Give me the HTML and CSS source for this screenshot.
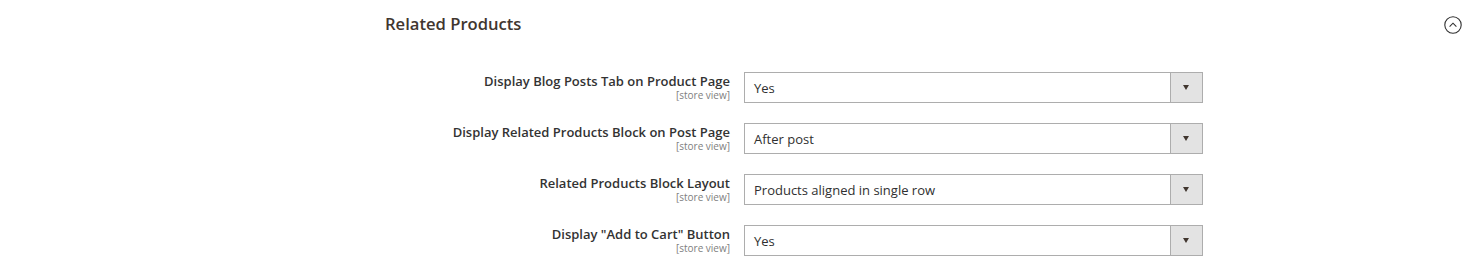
FILE: index.html
```html
<!DOCTYPE html>
<html lang="en">
<head>
    <meta charset="UTF-8">
    <title>Related Products</title>
    <link rel="stylesheet" href="styles.css">
</head>
<body>
    <section class="config-section">
        <div class="section-head">
            <h2 class="section-title">Related Products</h2>
            <svg class="collapse-icon" viewBox="0 0 18 18" fill="none" stroke="#303030" stroke-width="1.1">
                <circle cx="9" cy="9" r="8.2"></circle>
                <path d="M5.6 10.6 L9 7.2 L12.4 10.6"></path>
            </svg>
        </div>

        <div class="fields">
            <div class="field">
                <div class="field-label">
                    <span>Display Blog Posts Tab on Product Page</span>
                    <small>[store view]</small>
                </div>
                <div class="select">
                    <span class="select-value">Yes</span>
                    <span class="select-arrow"></span>
                </div>
            </div>
            <div class="field">
                <div class="field-label">
                    <span>Display Related Products Block on Post Page</span>
                    <small>[store view]</small>
                </div>
                <div class="select">
                    <span class="select-value">After post</span>
                    <span class="select-arrow"></span>
                </div>
            </div>
            <div class="field">
                <div class="field-label">
                    <span>Related Products Block Layout</span>
                    <small>[store view]</small>
                </div>
                <div class="select">
                    <span class="select-value">Products aligned in single row</span>
                    <span class="select-arrow"></span>
                </div>
            </div>
            <div class="field">
                <div class="field-label">
                    <span>Display "Add to Cart" Button</span>
                    <small>[store view]</small>
                </div>
                <div class="select">
                    <span class="select-value">Yes</span>
                    <span class="select-arrow"></span>
                </div>
            </div>
        </div>
    </section>
</body>
</html>
```

FILE: styles.css
```css
body {
    margin: 0;
    background-color: #fff;
    font-family: 'Open Sans', 'Liberation Sans', sans-serif;
    color: #303030;
}

.config-section {
    padding: 12px 22px 0 385px;
}

.section-head {
    display: flex;
    justify-content: space-between;
    align-items: center;
    height: 22px;
}

.section-title {
    margin: 0;
    font-size: 16.6px;
    font-weight: 600;
    color: #41362f;
}

.collapse-icon {
    width: 18px;
    height: 18px;
    margin-top: 3px;
}

.fields {
    display: flex;
    flex-direction: column;
    gap: 20px;
    margin-top: 38px;
}

.field {
    display: grid;
    grid-template-columns: 345px 459px;
    column-gap: 14px;
}

.field-label {
    display: flex;
    flex-direction: column;
    align-items: flex-end;
    padding-top: 1px;
    text-align: right;
}

.field-label span {
    font-size: 13px;
    font-weight: 600;
    line-height: 16px;
    color: #333;
}

.field-label small {
    font-size: 10px;
    line-height: 12px;
    color: #808080;
}

.select {
    display: flex;
    height: 31px;
    box-sizing: border-box;
    border: 1px solid #adadad;
    background-color: #fff;
}

.select-value {
    flex: 1;
    padding-left: 9px;
    font-size: 13px;
    line-height: 31px;
    color: #303030;
}

.select-arrow {
    position: relative;
    width: 31px;
    border-left: 1px solid #adadad;
    background-color: #e3e3e3;
}

.select-arrow::after {
    content: '';
    position: absolute;
    left: 12px;
    top: 12px;
    border-left: 3.5px solid transparent;
    border-right: 3.5px solid transparent;
    border-top: 5px solid #41362f;
}
```
